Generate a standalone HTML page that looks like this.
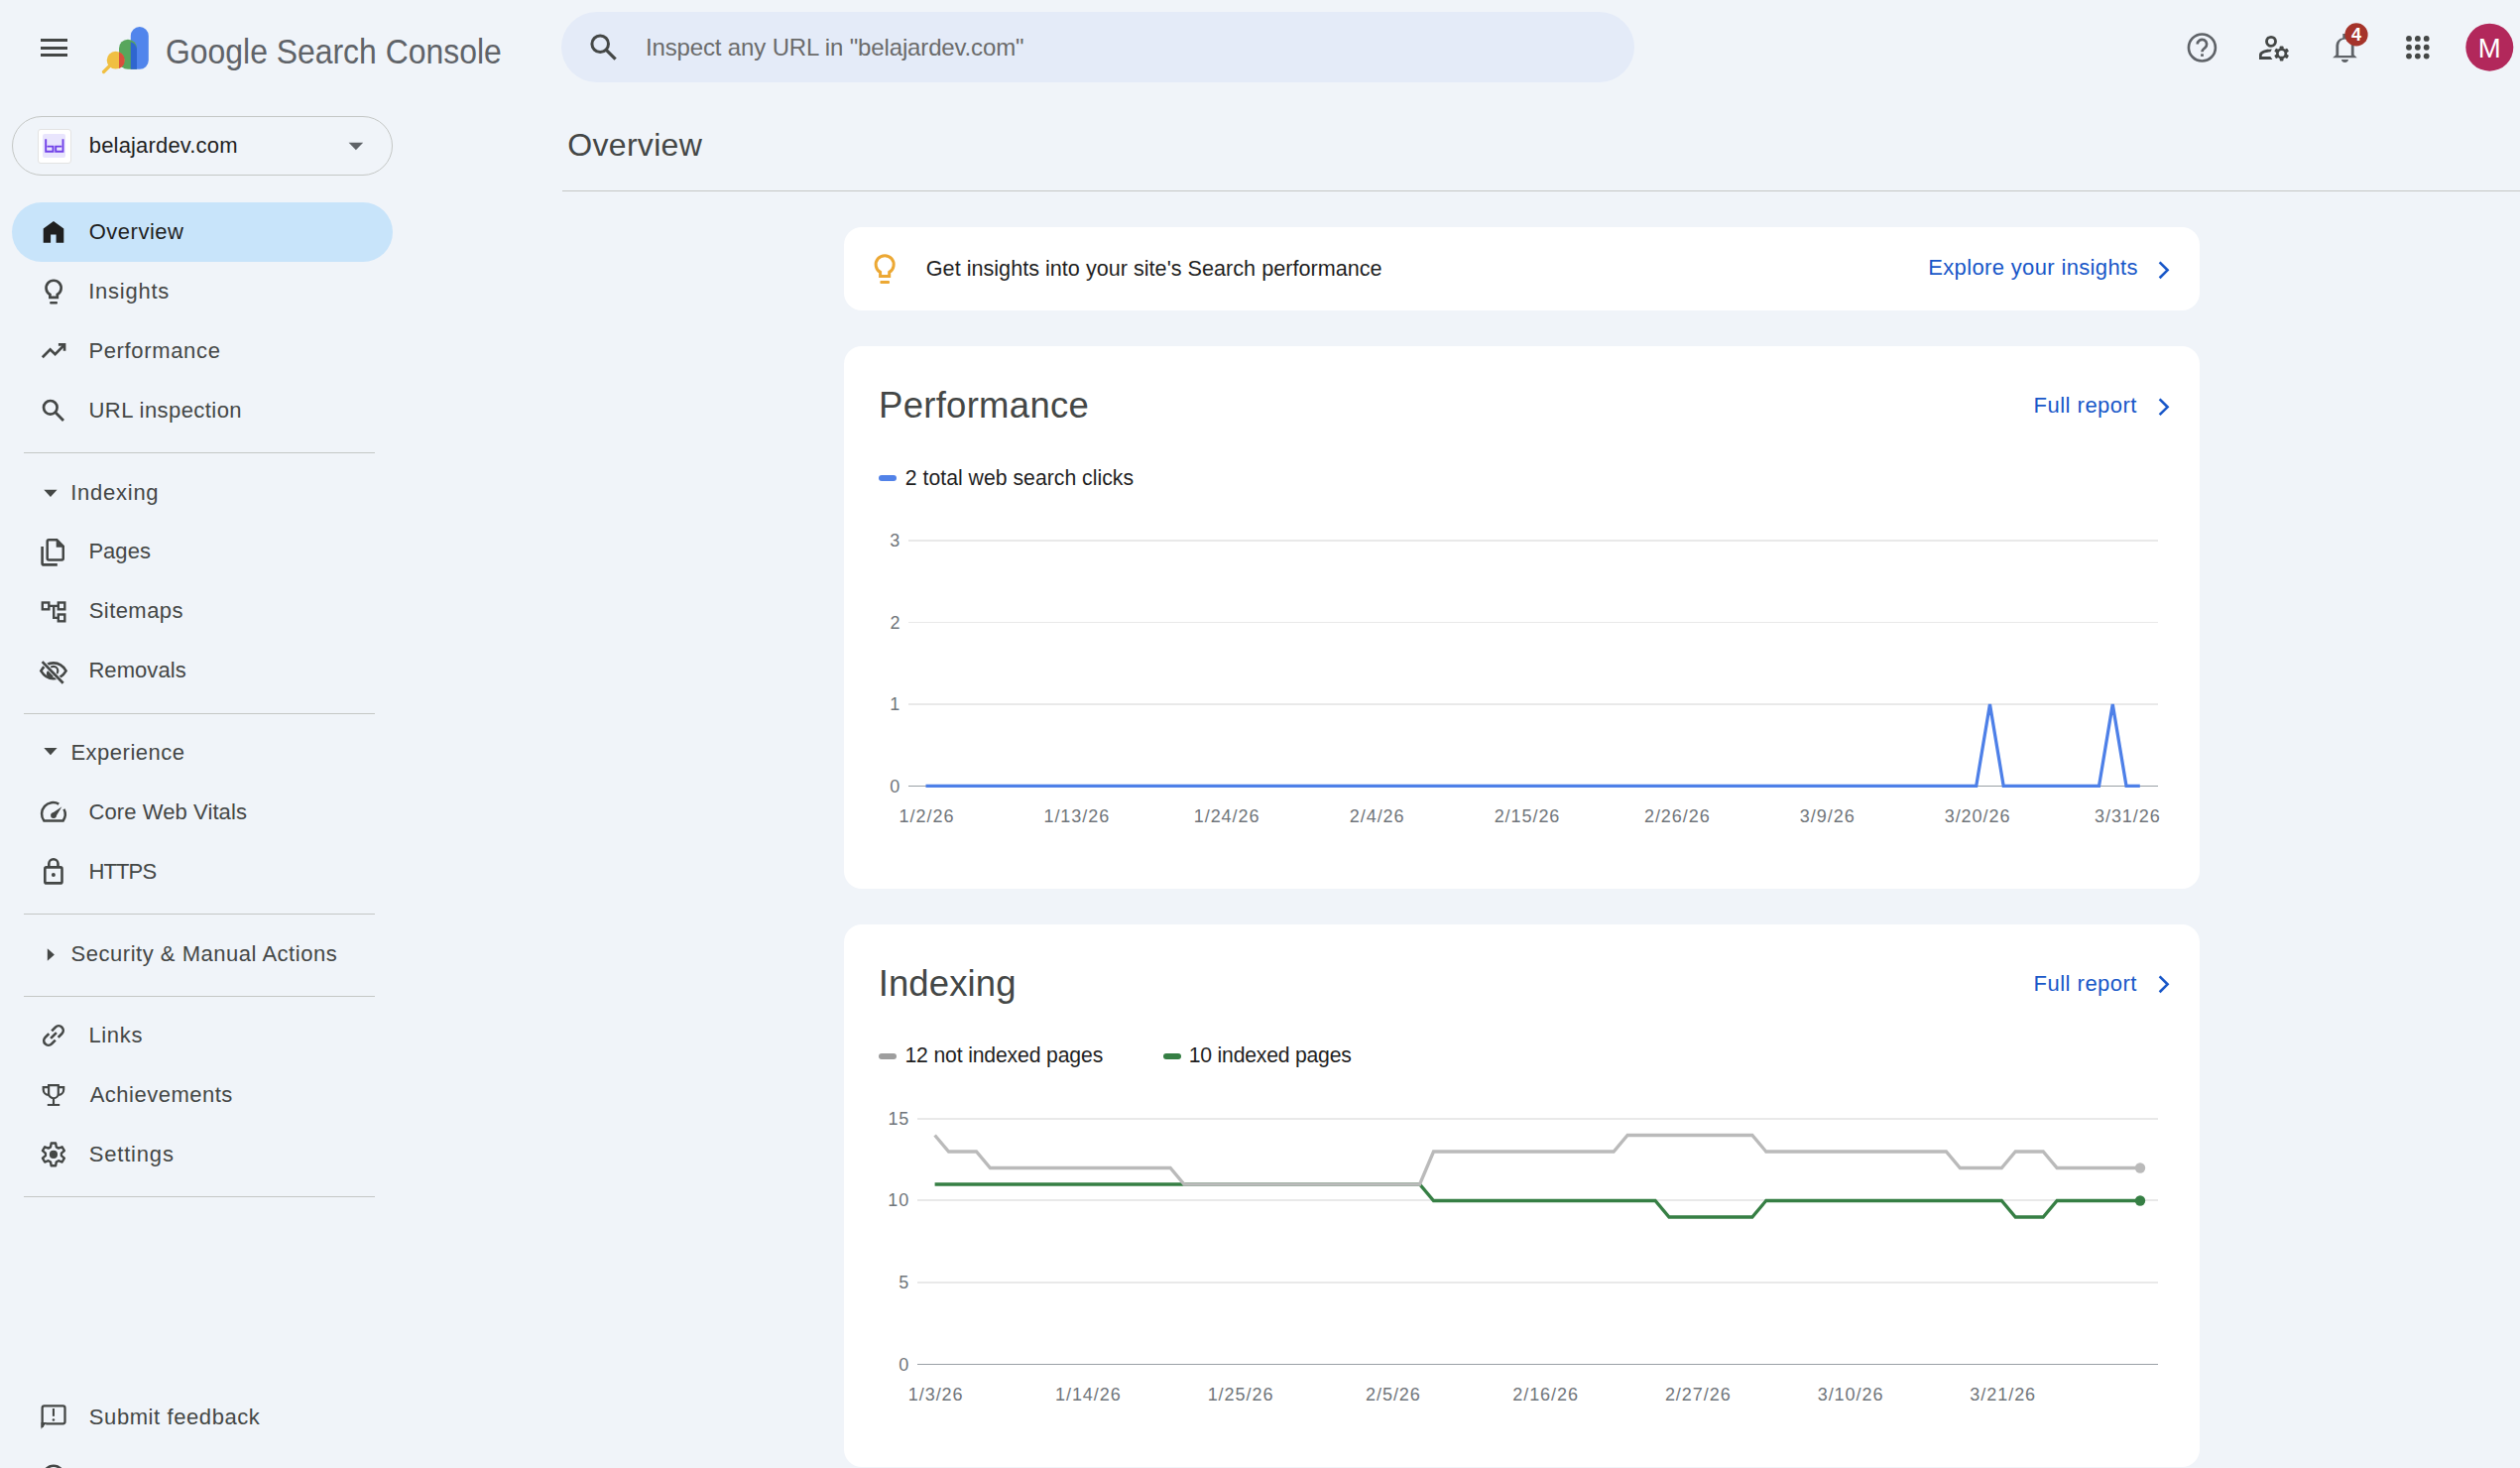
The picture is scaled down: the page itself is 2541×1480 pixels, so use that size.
<!DOCTYPE html>
<html><head><meta charset="utf-8"><style>
html,body{margin:0;padding:0;width:2541px;height:1480px;overflow:hidden;background:#f0f4f9;}
body{position:relative;font-family:"Liberation Sans",sans-serif;}
.t{position:absolute;white-space:pre;line-height:1;}
.r{position:absolute;}
.a{position:absolute;overflow:visible;}
</style></head><body>
<div class="r" style="left:40.5px;top:39.2px;width:27px;height:2.9px;background:#444746"></div>
<div class="r" style="left:40.5px;top:46.8px;width:27px;height:2.9px;background:#444746"></div>
<div class="r" style="left:40.5px;top:54.2px;width:27px;height:2.9px;background:#444746"></div>
<svg class="a" style="left:100px;top:24px" width="54" height="54" viewBox="100 24 54 54">
<path d="M131.8 36 a9 9 0 0 1 18 0 V60.8 a9 9 0 0 1 -9 9 H131.8 Z" fill="#5185ec"/>
<path d="M120 48.7 a9 9 0 0 1 18 0 V69.8 H129 a9 9 0 0 1 -9 -9 Z" fill="#58a65c"/>
<path d="M131.8 42.3 a9 9 0 0 1 6.2 6.4 V69.8 H131.8 Z" fill="#2f66cf"/>
<line x1="104.5" y1="72.5" x2="110.5" y2="66.5" stroke="#f0bf42" stroke-width="3.2" stroke-linecap="round"/>
<circle cx="116.6" cy="60.7" r="8.9" fill="#f0bf42"/>
<path d="M120 52.4 A8.9 8.9 0 0 1 120 69 Z" fill="#d94f3d"/>
</svg>
<div class="t" style="left:167.00px;top:34.27px;font-size:35px;color:#5f6368;transform:scaleX(0.9115);transform-origin:0 0;">Google Search Console</div>
<div class="r" style="left:566px;top:12px;width:1082px;height:71px;border-radius:36px;background:#e4ebf8"></div>
<svg class="a" style="left:590px;top:30px" width="36" height="36" viewBox="590 30 36 36">
<circle cx="605.2" cy="44.2" r="8.3" fill="none" stroke="#444746" stroke-width="3"/>
<line x1="611.3" y1="50.3" x2="620.6" y2="59.6" stroke="#444746" stroke-width="3.2"/>
</svg>
<div class="t" style="left:650.99px;top:36.38px;font-size:24px;color:#6b6b6b;letter-spacing:-0.147px;">Inspect any URL in "belajardev.com"</div>
<svg class="a" style="left:2190px;top:20px" width="351" height="60" viewBox="2190 20 351 60">
<circle cx="2220.4" cy="47.95" r="13.5" fill="none" stroke="#5f6368" stroke-width="2.6"/>
<path d="M2215.7 44.6 A4.7 4.7 0 1 1 2223.2 48.3 C2221.3 49.8 2220.45 50.6 2220.45 52.3" fill="none" stroke="#5f6368" stroke-width="2.7"/>
<rect x="2219.1" y="54.3" width="2.8" height="2.6" fill="#5f6368"/>
<circle cx="2290" cy="41.8" r="4.5" fill="none" stroke="#444746" stroke-width="2.85"/>
<path d="M2278 59.9 V55.5 C2278 51.5 2284 49.6 2290.8 49.4 L2289.5 52.3 C2284.5 52.5 2280.7 53.8 2280.7 56.2 V57.1 H2289.3 L2291.4 59.9 Z" fill="#444746"/>
<circle cx="2300.6" cy="53.9" r="5.6" fill="#444746"/><rect x="2298.70" y="46.40" width="3.8" height="7.5" rx="0.9" fill="#444746" transform="rotate(0 2300.6 53.9)"/><rect x="2298.70" y="46.40" width="3.8" height="7.5" rx="0.9" fill="#444746" transform="rotate(60 2300.6 53.9)"/><rect x="2298.70" y="46.40" width="3.8" height="7.5" rx="0.9" fill="#444746" transform="rotate(120 2300.6 53.9)"/><rect x="2298.70" y="46.40" width="3.8" height="7.5" rx="0.9" fill="#444746" transform="rotate(180 2300.6 53.9)"/><rect x="2298.70" y="46.40" width="3.8" height="7.5" rx="0.9" fill="#444746" transform="rotate(240 2300.6 53.9)"/><rect x="2298.70" y="46.40" width="3.8" height="7.5" rx="0.9" fill="#444746" transform="rotate(300 2300.6 53.9)"/>
<circle cx="2300.6" cy="53.9" r="2.9" fill="#f0f4f9"/>
<path d="M2352.1 58.2 H2376.7 L2373.6 55.2 V45.7 A7.7 7.7 0 0 0 2365.1 37.9 V34.1 H2362.3 L2362.3 38.2 A7.7 7.7 0 0 0 2355.4 45.7 V55.2 Z M2358.2 56 V45.7 A6.3 6.3 0 0 1 2370.8 45.7 V56 Z" fill="#5f6368" fill-rule="evenodd"/>
<path d="M2361 60.1 H2367.9 A3.45 2.8 0 0 1 2361 60.1 Z" fill="#5f6368"/>
<circle cx="2376" cy="34.9" r="11.6" fill="#a5332a"/>
<circle cx="2429.00" cy="38.90" r="2.9" fill="#444746"/>
<circle cx="2437.85" cy="38.90" r="2.9" fill="#444746"/>
<circle cx="2446.70" cy="38.90" r="2.9" fill="#444746"/>
<circle cx="2429.00" cy="47.75" r="2.9" fill="#444746"/>
<circle cx="2437.85" cy="47.75" r="2.9" fill="#444746"/>
<circle cx="2446.70" cy="47.75" r="2.9" fill="#444746"/>
<circle cx="2429.00" cy="56.60" r="2.9" fill="#444746"/>
<circle cx="2437.85" cy="56.60" r="2.9" fill="#444746"/>
<circle cx="2446.70" cy="56.60" r="2.9" fill="#444746"/>
<circle cx="2510.3" cy="47.7" r="24" fill="#b2285b"/>
</svg>
<div class="t" style="left:2371.05px;top:25.56px;font-size:18px;color:#ffffff;letter-spacing:0.000px;font-weight:700;">4</div>
<div class="t" style="left:2498.85px;top:34.72px;font-size:27.5px;color:#ffffff;letter-spacing:0.000px;">M</div>
<div class="r" style="left:12px;top:117px;width:382px;height:58px;border:1px solid #c4c7c5;border-radius:30px"></div>
<div class="r" style="left:37.5px;top:130px;width:32.5px;height:32.5px;border:1px solid #e3e3e3;border-radius:3px;background:#fff"></div>
<div class="r" style="left:43px;top:135.3px;width:23.4px;height:23.4px;border-radius:2px;background:#e9e5fd"></div>
<svg class="a" style="left:40px;top:132px" width="30" height="30" viewBox="40 132 30 30">
<path d="M46.2 140.2 v12.6 h7.3 v-5.2 h-6" fill="none" stroke="#7040e8" stroke-width="1.9"/>
<path d="M63.5 140.2 v12.6 h-7.3 v-5.2 h6" fill="none" stroke="#7040e8" stroke-width="1.9"/>
</svg>
<div class="t" style="left:89.78px;top:135.78px;font-size:22px;color:#1f1f1f;letter-spacing:0.168px;">belajardev.com</div>
<svg class="a" style="left:350px;top:142px" width="18" height="12" viewBox="350 142 18 12"><path d="M351.6 143.7 h14.6 l-7.3 7.6z" fill="#5f6368"/></svg>
<div class="r" style="left:12px;top:204px;width:384px;height:60px;border-radius:30px;background:#c8e4fa"></div>
<div class="t" style="left:89.76px;top:222.98px;font-size:22px;color:#1f1f1f;letter-spacing:0.501px;">Overview</div>
<div class="t" style="left:89.17px;top:282.98px;font-size:22px;color:#444746;letter-spacing:0.758px;">Insights</div>
<div class="t" style="left:89.40px;top:342.98px;font-size:22px;color:#444746;letter-spacing:0.654px;">Performance</div>
<div class="t" style="left:89.50px;top:402.98px;font-size:22px;color:#444746;letter-spacing:0.441px;">URL inspection</div>
<div class="t" style="left:89.40px;top:545.38px;font-size:22px;color:#444746;letter-spacing:0.030px;">Pages</div>
<div class="t" style="left:89.70px;top:605.38px;font-size:22px;color:#444746;letter-spacing:0.441px;">Sitemaps</div>
<div class="t" style="left:89.40px;top:665.38px;font-size:22px;color:#444746;letter-spacing:0.070px;">Removals</div>
<div class="t" style="left:89.58px;top:807.98px;font-size:22px;color:#444746;letter-spacing:0.084px;">Core Web Vitals</div>
<div class="t" style="left:89.40px;top:867.98px;font-size:22px;color:#444746;letter-spacing:-0.849px;">HTTPS</div>
<div class="t" style="left:89.40px;top:1032.98px;font-size:22px;color:#444746;letter-spacing:0.660px;">Links</div>
<div class="t" style="left:90.66px;top:1092.98px;font-size:22px;color:#444746;letter-spacing:0.496px;">Achievements</div>
<div class="t" style="left:89.70px;top:1152.78px;font-size:22px;color:#444746;letter-spacing:0.815px;">Settings</div>
<div class="t" style="left:89.80px;top:1418.18px;font-size:22px;color:#444746;letter-spacing:0.585px;">Submit feedback</div>
<div class="t" style="left:90.76px;top:1478.38px;font-size:22px;color:#444746;letter-spacing:-0.469px;">About Search Console</div>
<div class="t" style="left:71.17px;top:485.98px;font-size:22px;color:#444746;letter-spacing:0.753px;">Indexing</div>
<div class="t" style="left:71.40px;top:747.78px;font-size:22px;color:#444746;letter-spacing:0.513px;">Experience</div>
<div class="t" style="left:71.60px;top:951.18px;font-size:22px;color:#444746;letter-spacing:0.521px;">Security &amp; Manual Actions</div>
<div class="r" style="left:24px;top:455.5px;width:354px;height:1.3px;background:#c4c7c5"></div>
<div class="r" style="left:24px;top:718.8px;width:354px;height:1.3px;background:#c4c7c5"></div>
<div class="r" style="left:24px;top:921px;width:354px;height:1.3px;background:#c4c7c5"></div>
<div class="r" style="left:24px;top:1004px;width:354px;height:1.3px;background:#c4c7c5"></div>
<div class="r" style="left:24px;top:1206px;width:354px;height:1.3px;background:#c4c7c5"></div>
<svg class="a" style="left:0;top:0" width="400" height="1480" viewBox="0 0 400 1480">
<path d="M43.7 230.4 L54 222.9 L64.3 230.4 V244.7 H56.6 V236.6 H51.1 V244.7 H43.7 Z" fill="#1f1f1f"/>
<g fill="none" stroke="#444746" stroke-width="2.7">
<path d="M50.4 299.8 V296.9 A7.55 7.55 0 1 1 57.8 296.9 V299.8 Z"/>
<path d="M42.8 360.2 L50.6 352.3 L55.6 357.2 L64.5 348.1"/>
<path d="M58.9 347.3 H65.05 V353.7"/>
<circle cx="50.8" cy="410.8" r="6.8"/>
<path d="M55.6 415.6 L64.0 424.0" stroke-width="2.8"/>
</g>
<rect x="50.1" y="304" width="7.9" height="2.6" rx="1" fill="#444746"/>
<g fill="none" stroke="#444746" stroke-width="2.5">
<path d="M49.2 544.3 H57.3 L63.75 550.8 V562.9 A1.5 1.5 0 0 1 62.25 564.4 H49.2 A1.5 1.5 0 0 1 47.7 562.9 V545.8 A1.5 1.5 0 0 1 49.2 544.3 Z"/>
<path d="M42.6 550.9 V567.9 A1.5 1.5 0 0 0 44.1 569.4 H57.8" stroke-width="2.6"/>
</g>
<path d="M56.7 545 V551.7 H63.5 Z" fill="#444746"/>
<g fill="none" stroke="#444746" stroke-width="2.4">
<rect x="42.8" y="607.5" width="6.5" height="6.8"/>
<rect x="58.8" y="607.5" width="6.5" height="6.8"/>
<rect x="58.8" y="619.5" width="6.5" height="6.8"/>
<path d="M49.3 610.9 h9.5 M54.2 610.9 v12 h4.6"/>
</g>
<g fill="none" stroke="#444746" stroke-width="2.6">
<path d="M41.3 676.3 C44.5 671 49 668.4 53.95 668.4 C58.9 668.4 63.4 671 66.6 676.3 C63.4 681.6 58.9 684.2 53.95 684.2 C49 684.2 44.5 681.6 41.3 676.3 Z"/>
<circle cx="53.9" cy="676.3" r="4.4" stroke-width="2.2"/>
</g>
<path d="M48.14 675.9 A4.3 4.3 0 0 0 54.14 682.06 Z" fill="#444746"/>
<path d="M42.6 667.1 L63.7 688.7" stroke="#f0f4f9" stroke-width="4.4"/>
<path d="M42.6 667.1 L63.7 688.7" stroke="#444746" stroke-width="2.7"/>
<g fill="none" stroke="#444746" stroke-width="2.5">
<path d="M59.3 810.6 A11.5 11.5 0 0 0 44.35 827.45 H63.65 A11.5 11.5 0 0 0 64.5 815.8"/>
</g>
<circle cx="54" cy="822.1" r="2.9" fill="#444746"/>
<path d="M55.9 823.9 L52.1 820.3 L62.4 813.2 Z" fill="#444746"/>
<g fill="none" stroke="#444746" stroke-width="2.6">
<rect x="45.3" y="874.4" width="17.2" height="16" rx="1.5"/>
<path d="M49.3 874.4 v-3.6 a4.6 4.6 0 0 1 9.2 0 v3.6"/>
</g>
<circle cx="53.9" cy="882.1" r="2" fill="#444746"/>
<g transform="translate(54,1044) rotate(-45)" fill="none" stroke="#444746" stroke-width="2.6">
<path d="M2 -4.6 H7.3 A4.6 4.6 0 0 1 7.3 4.6 H2"/>
<path d="M-2 4.6 H-7.3 A4.6 4.6 0 0 1 -7.3 -4.6 H-2"/>
<path d="M-4.1 0 H4.1"/>
</g>
<g fill="none" stroke="#444746" stroke-width="2.2">
<path d="M49.1 1094.1 H58.8 V1102.4 A4.85 4.85 0 0 1 49.1 1102.4 Z"/>
<path d="M49.1 1096.2 H43.7 V1098.5 C43.7 1101.5 46 1103.8 49.1 1104"/>
<path d="M58.8 1096.2 H64.2 V1098.5 C64.2 1101.5 61.9 1103.8 58.8 1104"/>
<path d="M54 1107.2 V1113.5"/>
<path d="M47.8 1113.95 H60.2" stroke-width="2"/>
</g>
<path d="M56.80 1156.34 L56.11 1152.51 L51.69 1152.51 L51.00 1156.34 L48.80 1157.61 L45.15 1156.29 L42.93 1160.12 L45.90 1162.63 L45.90 1165.17 L42.93 1167.68 L45.15 1171.51 L48.80 1170.19 L51.00 1171.46 L51.69 1175.29 L56.11 1175.29 L56.80 1171.46 L59.00 1170.19 L62.65 1171.51 L64.87 1167.68 L61.90 1165.17 L61.90 1162.63 L64.87 1160.12 L62.65 1156.29 L59.00 1157.61Z" fill="none" stroke="#444746" stroke-width="2.4" stroke-linejoin="round"/>
<circle cx="53.95" cy="1163.9" r="4.1" fill="#444746"/>
<path d="M42.65 1439 V1419.4 A2 2 0 0 1 44.65 1417.4 H63.5 A2 2 0 0 1 65.5 1419.4 V1433.3 A2 2 0 0 1 63.5 1435.3 H46.2" fill="none" stroke="#444746" stroke-width="2.3"/>
<path d="M41.5 1440.7 V1434.1 H47.3 Z" fill="#444746"/>
<rect x="52.9" y="1420" width="2.1" height="7.8" fill="#444746"/>
<circle cx="53.95" cy="1431.5" r="1.3" fill="#444746"/>
<path d="M44.3 493.8 h13.3 l-6.65 7.2z" fill="#444746"/>
<path d="M44.3 754 h13.3 l-6.65 7.2z" fill="#444746"/>
<path d="M47.8 956.3 v12.4 l7.1 -6.2z" fill="#444746"/>
<circle cx="54" cy="1488" r="10.2" fill="none" stroke="#444746" stroke-width="2.6"/>
</svg>
<div class="t" style="left:572.28px;top:130.21px;font-size:32px;color:#444746;letter-spacing:0.311px;">Overview</div>
<div class="r" style="left:567px;top:191.8px;width:1974px;height:1.3px;background:#c4c7c5"></div>
<div class="r" style="left:851px;top:229px;width:1367px;height:84px;border-radius:18px;background:#fff"></div>
<svg class="a" style="left:870px;top:250px" width="40" height="40" viewBox="870 250 40 40">
<path d="M887.6 278.4 V274.4 A9 9 0 1 1 896.7 274.4 V278.4 Z" fill="none" stroke="#eca834" stroke-width="3"/>
<rect x="887.4" y="283.1" width="9.6" height="2.8" rx="1" fill="#eca834"/>
</svg>
<div class="t" style="left:933.81px;top:259.92px;font-size:21.6px;color:#1f1f1f;letter-spacing:0.015px;">Get insights into your site's Search performance</div>
<div class="t" style="left:1944.20px;top:259.38px;font-size:22px;color:#1857c8;letter-spacing:0.355px;">Explore your insights</div>
<svg class="a" style="left:2170px;top:259.8px" width="24" height="24" viewBox="2170 259.8 24 24"><path d="M2177.6 264.2 l8 7.9 l-8 7.9" fill="none" stroke="#1857c8" stroke-width="2.6"/></svg>
<div class="r" style="left:851px;top:349px;width:1367px;height:547px;border-radius:18px;background:#fff"></div>
<div class="t" style="left:886.01px;top:391.00px;font-size:36.5px;color:#444746;letter-spacing:0.287px;">Performance</div>
<div class="t" style="left:2050.60px;top:398.18px;font-size:22px;color:#1857c8;letter-spacing:0.483px;">Full report</div>
<svg class="a" style="left:2170px;top:397.5px" width="24" height="24" viewBox="2170 397.5 24 24"><path d="M2177.6 401.9 l8 7.9 l-8 7.9" fill="none" stroke="#1857c8" stroke-width="2.6"/></svg>
<div class="r" style="left:886.3px;top:479px;width:17.5px;height:6px;border-radius:3px;background:#5282e8"></div>
<div class="t" style="left:912.83px;top:471.05px;font-size:21.2px;color:#1f1f1f;letter-spacing:0.024px;">2 total web search clicks</div>
<div class="r" style="left:916.3px;top:544.25px;width:1259.5000000000002px;height:1.5px;background:#e9e9e9"></div>
<div class="t" style="left:897.28px;top:536.26px;font-size:18px;color:#70757a;letter-spacing:0.950px;">3</div>
<div class="r" style="left:916.3px;top:626.75px;width:1259.5000000000002px;height:1.5px;background:#e9e9e9"></div>
<div class="t" style="left:897.39px;top:618.76px;font-size:18px;color:#70757a;letter-spacing:0.950px;">2</div>
<div class="r" style="left:916.3px;top:709.25px;width:1259.5000000000002px;height:1.5px;background:#e9e9e9"></div>
<div class="t" style="left:897.37px;top:701.26px;font-size:18px;color:#70757a;letter-spacing:0.950px;">1</div>
<div class="r" style="left:916.3px;top:791.65px;width:1259.5000000000002px;height:1.5px;background:#e9e9e9"></div>
<div class="t" style="left:897.19px;top:783.66px;font-size:18px;color:#70757a;letter-spacing:0.950px;">0</div>
<div class="r" style="left:916.3px;top:791.65px;width:1259.5000000000002px;height:1.5px;background:#9aa0a6"></div>
<svg class="a" style="left:0;top:0" width="2541" height="1480" viewBox="0 0 2541 1480"><path d="M933.50 792.40 L947.26 792.40 L961.01 792.40 L974.77 792.40 L988.52 792.40 L1002.28 792.40 L1016.04 792.40 L1029.79 792.40 L1043.55 792.40 L1057.30 792.40 L1071.06 792.40 L1084.82 792.40 L1098.57 792.40 L1112.33 792.40 L1126.08 792.40 L1139.84 792.40 L1153.60 792.40 L1167.35 792.40 L1181.11 792.40 L1194.86 792.40 L1208.62 792.40 L1222.38 792.40 L1236.13 792.40 L1249.89 792.40 L1263.64 792.40 L1277.40 792.40 L1291.16 792.40 L1304.91 792.40 L1318.67 792.40 L1332.42 792.40 L1346.18 792.40 L1359.94 792.40 L1373.69 792.40 L1387.45 792.40 L1401.20 792.40 L1414.96 792.40 L1428.72 792.40 L1442.47 792.40 L1456.23 792.40 L1469.98 792.40 L1483.74 792.40 L1497.50 792.40 L1511.25 792.40 L1525.01 792.40 L1538.76 792.40 L1552.52 792.40 L1566.28 792.40 L1580.03 792.40 L1593.79 792.40 L1607.54 792.40 L1621.30 792.40 L1635.06 792.40 L1648.81 792.40 L1662.57 792.40 L1676.32 792.40 L1690.08 792.40 L1703.84 792.40 L1717.59 792.40 L1731.35 792.40 L1745.10 792.40 L1758.86 792.40 L1772.62 792.40 L1786.37 792.40 L1800.13 792.40 L1813.88 792.40 L1827.64 792.40 L1841.40 792.40 L1855.15 792.40 L1868.91 792.40 L1882.66 792.40 L1896.42 792.40 L1910.18 792.40 L1923.93 792.40 L1937.69 792.40 L1951.44 792.40 L1965.20 792.40 L1978.96 792.40 L1992.71 792.40 L2006.47 710.00 L2020.22 792.40 L2033.98 792.40 L2047.74 792.40 L2061.49 792.40 L2075.25 792.40 L2089.00 792.40 L2102.76 792.40 L2116.52 792.40 L2130.27 710.00 L2144.03 792.40 L2157.78 792.40" fill="none" stroke="#4e80e8" stroke-width="3.3" stroke-linejoin="miter"/></svg>
<div class="t" style="left:906.61px;top:814.46px;font-size:18px;color:#70757a;letter-spacing:0.950px;">1/2/26</div>
<div class="t" style="left:1052.45px;top:814.46px;font-size:18px;color:#70757a;letter-spacing:0.950px;">1/13/26</div>
<div class="t" style="left:1203.76px;top:814.46px;font-size:18px;color:#70757a;letter-spacing:0.950px;">1/24/26</div>
<div class="t" style="left:1360.79px;top:814.46px;font-size:18px;color:#70757a;letter-spacing:0.950px;">2/4/26</div>
<div class="t" style="left:1506.63px;top:814.46px;font-size:18px;color:#70757a;letter-spacing:0.950px;">2/15/26</div>
<div class="t" style="left:1657.95px;top:814.46px;font-size:18px;color:#70757a;letter-spacing:0.950px;">2/26/26</div>
<div class="t" style="left:1814.85px;top:814.46px;font-size:18px;color:#70757a;letter-spacing:0.950px;">3/9/26</div>
<div class="t" style="left:1960.69px;top:814.46px;font-size:18px;color:#70757a;letter-spacing:0.950px;">3/20/26</div>
<div class="t" style="left:2112.00px;top:814.46px;font-size:18px;color:#70757a;letter-spacing:0.950px;">3/31/26</div>
<div class="r" style="left:851px;top:932px;width:1367px;height:547px;border-radius:18px;background:#fff"></div>
<div class="t" style="left:885.63px;top:973.60px;font-size:36.5px;color:#444746;letter-spacing:0.132px;">Indexing</div>
<div class="t" style="left:2050.60px;top:980.58px;font-size:22px;color:#1857c8;letter-spacing:0.483px;">Full report</div>
<svg class="a" style="left:2170px;top:980.0px" width="24" height="24" viewBox="2170 980.0 24 24"><path d="M2177.6 984.4 l8 7.9 l-8 7.9" fill="none" stroke="#1857c8" stroke-width="2.6"/></svg>
<div class="r" style="left:886px;top:1062px;width:17.8px;height:6px;border-radius:3px;background:#9e9e9e"></div>
<div class="t" style="left:912.39px;top:1053.45px;font-size:21.2px;color:#1f1f1f;letter-spacing:-0.146px;">12 not indexed pages</div>
<div class="r" style="left:1172.9px;top:1062px;width:17.8px;height:6px;border-radius:3px;background:#367f44"></div>
<div class="t" style="left:1198.79px;top:1053.45px;font-size:21.2px;color:#1f1f1f;letter-spacing:-0.214px;">10 indexed pages</div>
<div class="r" style="left:925.2px;top:1127.15px;width:1250.6000000000001px;height:1.5px;background:#e9e9e9"></div>
<div class="t" style="left:895.38px;top:1119.16px;font-size:18px;color:#70757a;letter-spacing:0.950px;">15</div>
<div class="r" style="left:925.2px;top:1209.45px;width:1250.6000000000001px;height:1.5px;background:#e9e9e9"></div>
<div class="t" style="left:895.33px;top:1201.46px;font-size:18px;color:#70757a;letter-spacing:0.950px;">10</div>
<div class="r" style="left:925.2px;top:1292.15px;width:1250.6000000000001px;height:1.5px;background:#e9e9e9"></div>
<div class="t" style="left:906.35px;top:1284.16px;font-size:18px;color:#70757a;letter-spacing:0.950px;">5</div>
<div class="r" style="left:925.2px;top:1374.75px;width:1250.6000000000001px;height:1.5px;background:#e9e9e9"></div>
<div class="t" style="left:906.29px;top:1366.76px;font-size:18px;color:#70757a;letter-spacing:0.950px;">0</div>
<div class="r" style="left:925.2px;top:1374.75px;width:1250.6000000000001px;height:1.5px;background:#9aa0a6"></div>
<svg class="a" style="left:0;top:0" width="2541" height="1480" viewBox="0 0 2541 1480">
<path d="M942.60 1194.00 L956.57 1194.00 L970.54 1194.00 L984.51 1194.00 L998.48 1194.00 L1012.45 1194.00 L1026.42 1194.00 L1040.39 1194.00 L1054.36 1194.00 L1068.33 1194.00 L1082.30 1194.00 L1096.27 1194.00 L1110.24 1194.00 L1124.21 1194.00 L1138.18 1194.00 L1152.15 1194.00 L1166.12 1194.00 L1180.09 1194.00 L1194.06 1194.00 L1208.03 1194.00 L1222.00 1194.00 L1235.97 1194.00 L1249.94 1194.00 L1263.91 1194.00 L1277.88 1194.00 L1291.85 1194.00 L1305.82 1194.00 L1319.79 1194.00 L1333.76 1194.00 L1347.73 1194.00 L1361.70 1194.00 L1375.67 1194.00 L1389.64 1194.00 L1403.61 1194.00 L1417.58 1194.00 L1431.55 1194.00 L1445.52 1210.50 L1459.49 1210.50 L1473.46 1210.50 L1487.43 1210.50 L1501.40 1210.50 L1515.37 1210.50 L1529.34 1210.50 L1543.31 1210.50 L1557.28 1210.50 L1571.25 1210.50 L1585.22 1210.50 L1599.19 1210.50 L1613.16 1210.50 L1627.13 1210.50 L1641.10 1210.50 L1655.07 1210.50 L1669.04 1210.50 L1683.01 1227.00 L1696.98 1227.00 L1710.95 1227.00 L1724.92 1227.00 L1738.89 1227.00 L1752.86 1227.00 L1766.83 1227.00 L1780.80 1210.50 L1794.77 1210.50 L1808.74 1210.50 L1822.71 1210.50 L1836.68 1210.50 L1850.65 1210.50 L1864.62 1210.50 L1878.59 1210.50 L1892.56 1210.50 L1906.53 1210.50 L1920.50 1210.50 L1934.47 1210.50 L1948.44 1210.50 L1962.41 1210.50 L1976.38 1210.50 L1990.35 1210.50 L2004.32 1210.50 L2018.29 1210.50 L2032.26 1227.00 L2046.23 1227.00 L2060.20 1227.00 L2074.17 1210.50 L2088.14 1210.50 L2102.11 1210.50 L2116.08 1210.50 L2130.05 1210.50 L2144.02 1210.50 L2157.99 1210.50" fill="none" stroke="#367f44" stroke-width="3.3"/>
<path d="M942.60 1144.50 L956.57 1161.00 L970.54 1161.00 L984.51 1161.00 L998.48 1177.50 L1012.45 1177.50 L1026.42 1177.50 L1040.39 1177.50 L1054.36 1177.50 L1068.33 1177.50 L1082.30 1177.50 L1096.27 1177.50 L1110.24 1177.50 L1124.21 1177.50 L1138.18 1177.50 L1152.15 1177.50 L1166.12 1177.50 L1180.09 1177.50 L1194.06 1194.00 L1208.03 1194.00 L1222.00 1194.00 L1235.97 1194.00 L1249.94 1194.00 L1263.91 1194.00 L1277.88 1194.00 L1291.85 1194.00 L1305.82 1194.00 L1319.79 1194.00 L1333.76 1194.00 L1347.73 1194.00 L1361.70 1194.00 L1375.67 1194.00 L1389.64 1194.00 L1403.61 1194.00 L1417.58 1194.00 L1431.55 1194.00 L1445.52 1161.00 L1459.49 1161.00 L1473.46 1161.00 L1487.43 1161.00 L1501.40 1161.00 L1515.37 1161.00 L1529.34 1161.00 L1543.31 1161.00 L1557.28 1161.00 L1571.25 1161.00 L1585.22 1161.00 L1599.19 1161.00 L1613.16 1161.00 L1627.13 1161.00 L1641.10 1144.50 L1655.07 1144.50 L1669.04 1144.50 L1683.01 1144.50 L1696.98 1144.50 L1710.95 1144.50 L1724.92 1144.50 L1738.89 1144.50 L1752.86 1144.50 L1766.83 1144.50 L1780.80 1161.00 L1794.77 1161.00 L1808.74 1161.00 L1822.71 1161.00 L1836.68 1161.00 L1850.65 1161.00 L1864.62 1161.00 L1878.59 1161.00 L1892.56 1161.00 L1906.53 1161.00 L1920.50 1161.00 L1934.47 1161.00 L1948.44 1161.00 L1962.41 1161.00 L1976.38 1177.50 L1990.35 1177.50 L2004.32 1177.50 L2018.29 1177.50 L2032.26 1161.00 L2046.23 1161.00 L2060.20 1161.00 L2074.17 1177.50 L2088.14 1177.50 L2102.11 1177.50 L2116.08 1177.50 L2130.05 1177.50 L2144.02 1177.50 L2157.99 1177.50" fill="none" stroke="#bababa" stroke-width="3.3"/>
<circle cx="2157.99" cy="1177.50" r="5.2" fill="#bababa"/>
<circle cx="2157.99" cy="1210.50" r="5.2" fill="#367f44"/>
</svg>
<div class="t" style="left:915.81px;top:1397.06px;font-size:18px;color:#70757a;letter-spacing:0.950px;">1/3/26</div>
<div class="t" style="left:1064.00px;top:1397.06px;font-size:18px;color:#70757a;letter-spacing:0.950px;">1/14/26</div>
<div class="t" style="left:1217.67px;top:1397.06px;font-size:18px;color:#70757a;letter-spacing:0.950px;">1/25/26</div>
<div class="t" style="left:1377.06px;top:1397.06px;font-size:18px;color:#70757a;letter-spacing:0.950px;">2/5/26</div>
<div class="t" style="left:1525.25px;top:1397.06px;font-size:18px;color:#70757a;letter-spacing:0.950px;">2/16/26</div>
<div class="t" style="left:1678.92px;top:1397.06px;font-size:18px;color:#70757a;letter-spacing:0.950px;">2/27/26</div>
<div class="t" style="left:1832.69px;top:1397.06px;font-size:18px;color:#70757a;letter-spacing:0.950px;">3/10/26</div>
<div class="t" style="left:1986.36px;top:1397.06px;font-size:18px;color:#70757a;letter-spacing:0.950px;">3/21/26</div>
</body></html>
